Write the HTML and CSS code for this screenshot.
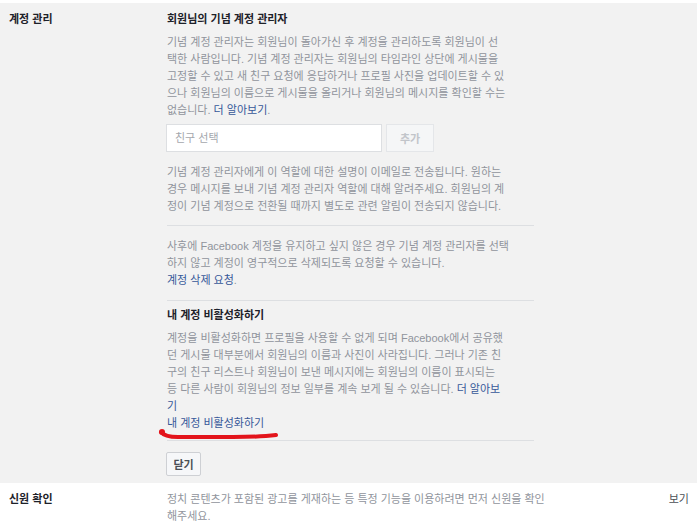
FILE: index.html
```html
<!DOCTYPE html>
<html>
	<head>
		<meta charset="UTF-8">
		<title>계정 관리</title>
		<link rel="stylesheet" href="styles.css">
	</head>
	<body>
		<div class="settings">
			<div class="row row-open">
				<div class="row-label">계정 관리</div>
				<div class="row-body">
					<h3 class="sec-title">회원님의 기념 계정 관리자</h3>
					<p class="desc">기념 계정 관리자는 회원님이 돌아가신 후 계정을 관리하도록 회원님이 선<br>택한 사람입니다. 기념 계정 관리자는 회원님의 타임라인 상단에 게시물을<br>고정할 수 있고 새 친구 요청에 응답하거나 프로필 사진을 업데이트할 수 있<br>으나 회원님의 이름으로 게시물을 올리거나 회원님의 메시지를 확인할 수는<br>없습니다. <a href="#">더 알아보기</a>.</p>
					<div class="picker">
						<input type="text" placeholder="친구 선택">
						<button class="btn-add" disabled>추가</button>
					</div>
					<p class="desc desc-gap">기념 계정 관리자에게 이 역할에 대한 설명이 이메일로 전송됩니다. 원하는<br>경우 메시지를 보내 기념 계정 관리자 역할에 대해 알려주세요. 회원님의 계<br>정이 기념 계정으로 전환될 때까지 별도로 관련 알림이 전송되지 않습니다.</p>
					<hr class="line">
					<p class="desc desc-gap">사후에 Facebook 계정을 유지하고 싶지 않은 경우 기념 계정 관리자를 선택<br>하지 않고 계정이 영구적으로 삭제되도록 요청할 수 있습니다.<br><a href="#">계정 삭제 요청</a>.</p>
					<hr class="line line-2">
					<h3 class="sec-title title-2">내 계정 비활성화하기</h3>
					<p class="desc">계정을 비활성화하면 프로필을 사용할 수 없게 되며 Facebook에서 공유했<br>던 게시물 대부분에서 회원님의 이름과 사진이 사라집니다. 그러나 기존 친<br>구의 친구 리스트나 회원님이 보낸 메시지에는 회원님의 이름이 표시되는<br>등 다른 사람이 회원님의 정보 일부를 계속 보게 될 수 있습니다. <a href="#">더 알아보<br>기</a></p>
					<div class="deact">
						<a href="#">내 계정 비활성화하기</a>
						<!-- 빨간 밑줄 표시 -->
						<svg class="scribble" width="124" height="14" viewBox="0 0 124 14">
							<circle cx="4" cy="4" r="3" fill="#e3141b"/>
							<path d="M3 4 C6 8 11 9 20 9 L75 9 C95 9 110 8 118 7" fill="none" stroke="#e3141b" stroke-width="4" stroke-linecap="round"/>
						</svg>
					</div>
					<hr class="line line-3">
					<button class="btn">닫기</button>
				</div>
			</div>
			<div class="row">
				<div class="row-label">신원 확인</div>
				<div class="row-text">정치 콘텐츠가 포함된 광고를 게재하는 등 특정 기능을 이용하려면 먼저 신원을 확인<br>해주세요.</div>
				<a class="row-edit" href="#">보기</a>
			</div>
		</div>
	</body>
</html>
```
FILE: styles.css
```css
*{margin:0;padding:0;box-sizing:border-box;}
body{
	background:#fff;
	font-family:"Liberation Sans","Noto Sans CJK KR",sans-serif;
	font-size:11px;
	line-height:17px;
	color:#1d2129;
}
a{color:#365899;text-decoration:none;}
.settings{
	width:697px;
	padding-top:3px;
}
.row{
	display:flex;
	padding:8px 8px 8px 9px;
}
.row-open{
	background:#f2f2f2;
	padding-bottom:7px;
}
.row-label{
	width:158px;
	flex-shrink:0;
	font-weight:bold;
}
.row-body{
	width:367px;
}
.sec-title{
	font-size:11px;
	font-weight:bold;
	line-height:17px;
}
.title-2{margin-top:6px;}
.desc{
	margin-top:6px;
	color:#90949c;
	white-space:nowrap;
}
.desc-gap{margin-top:12px;}
.picker{
	display:flex;
	gap:4px;
	margin-top:5px;
	margin-left:-1px;
}
.picker input{
	width:216px;
	height:28px;
	border:1px solid #dddfe2;
	background:#fff;
	padding:0 8px;
	font-family:inherit;
	font-size:11px;
	color:#1d2129;
	outline:none;
}
.picker input::placeholder{color:#a4a7ad;}
.btn-add{
	width:48px;
	height:28px;
	border:1px solid #e4e6e9;
	background:#f5f6f7;
	color:#c2c5ca;
	font-family:inherit;
	font-size:11px;
	font-weight:bold;
}
.line{
	border:0;
	border-top:1px solid #dddfe2;
	margin-top:10px;
}
.line-2{margin-top:11px;}
.line-3{margin-top:8px;}
.deact{
	position:relative;
}
.scribble{
	position:absolute;
	left:-9px;
	top:13px;
}
.btn{
	display:block;
	margin-top:11px;
	margin-left:-1px;
	width:35px;
	height:24px;
	border:1px solid #ced0d4;
	border-radius:2px;
	background:#f6f7f9;
	color:#4b4f56;
	font-family:inherit;
	font-size:11px;
	font-weight:bold;
}
.row-text{
	flex:1;
	color:#90949c;
	white-space:nowrap;
}
.row-edit{
	color:#4b4f56;
}
```
